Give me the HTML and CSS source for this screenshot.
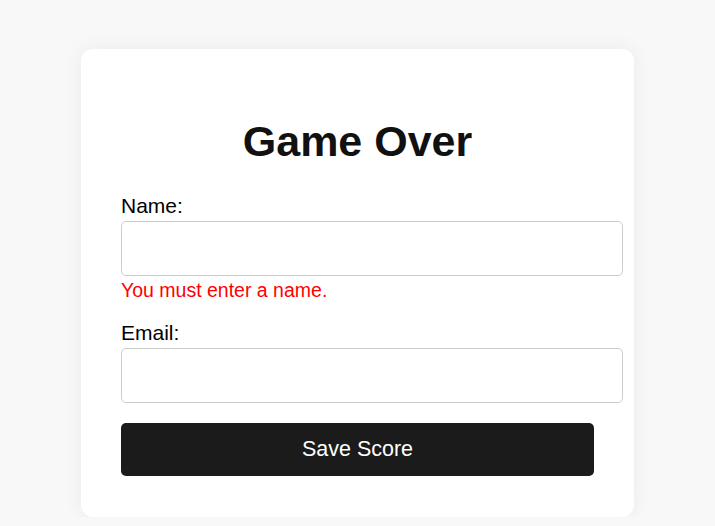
FILE: index.html
```html
<!DOCTYPE html>
<html>
<head>
<meta charset="utf-8">
<link rel="stylesheet" href="styles.css">
</head>
<body>
<div class="card">
  <h1 class="title">Game Over</h1>
  <form class="form">
    <div class="field">
      <label class="label" for="name">Name:</label>
      <input class="input" id="name" type="text">
      <div class="error">You must enter a name.</div>
    </div>
    <div class="field">
      <label class="label" for="email">Email:</label>
      <input class="input" id="email" type="email">
    </div>
    <button class="button" type="button">Save Score</button>
  </form>
</div>
</body>
</html>
```
FILE: styles.css
```css
html, body {
  margin: 0;
  padding: 0;
}
body {
  background: #f8f8f8;
  font-family: "Liberation Sans", Arial, sans-serif;
  color: #000;
  padding-top: 49px;
}
.card {
  width: 553px;
  box-sizing: border-box;
  margin: 0 auto;
  background: #fff;
  border-radius: 12px;
  box-shadow: 0 0 20px rgba(0, 0, 0, 0.06);
  padding: 67px 40px 41px;
}
.title {
  margin: 0 0 28px;
  text-align: center;
  font-size: 43px;
  font-weight: bold;
  line-height: 50px;
  color: #111;
}
.form {
  display: flex;
  flex-direction: column;
}
.field {
  display: flex;
  flex-direction: column;
  margin-bottom: 20px;
}
.label {
  font-size: 21px;
  line-height: 24px;
  margin-bottom: 3px;
}
.input {
  height: 55px;
  box-sizing: border-box;
  width: 502px;
  border: 1px solid #ccc;
  border-radius: 5px;
  padding: 0 14px;
  font-size: 20px;
  font-family: inherit;
  background: #fff;
  margin: 0;
}
.error {
  color: #ff0000;
  font-size: 19.5px;
  line-height: 22px;
  margin-top: 3px;
}
.button {
  height: 53px;
  width: 100%;
  border: none;
  border-radius: 5px;
  background: #1b1b1b;
  color: #fff;
  font-size: 21.5px;
  font-family: inherit;
  cursor: pointer;
}
```
